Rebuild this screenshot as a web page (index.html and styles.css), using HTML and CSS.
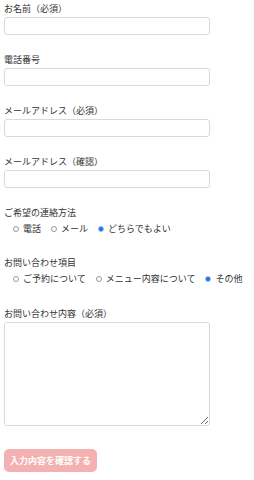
FILE: index.html
```html
<!DOCTYPE html>
<html lang="ja">
<head>
  <meta charset="UTF-8">
  <title>お問い合わせ</title>
  <link rel="stylesheet" href="styles.css">
</head>
<body>

<form class="contact-form">
  <div class="field">
    <label class="field-label" for="name">お名前（必須）</label>
    <input type="text" id="name" class="text-input">
  </div>

  <div class="field">
    <label class="field-label" for="tel">電話番号</label>
    <input type="text" id="tel" class="text-input">
  </div>

  <div class="field">
    <label class="field-label" for="mail">メールアドレス（必須）</label>
    <input type="text" id="mail" class="text-input">
  </div>

  <div class="field">
    <label class="field-label" for="mail2">メールアドレス（確認）</label>
    <input type="text" id="mail2" class="text-input">
  </div>

  <div class="field field-radio">
    <p class="field-label">ご希望の連絡方法</p>
    <div class="radio-row">
      <label class="radio-item"><input type="radio" name="contact"><span>電話</span></label>
      <label class="radio-item"><input type="radio" name="contact"><span>メール</span></label>
      <label class="radio-item"><input type="radio" name="contact" checked><span>どちらでもよい</span></label>
    </div>
  </div>

  <div class="field field-radio field-last-radio">
    <p class="field-label">お問い合わせ項目</p>
    <div class="radio-row">
      <label class="radio-item"><input type="radio" name="topic"><span>ご予約について</span></label>
      <label class="radio-item"><input type="radio" name="topic"><span>メニュー内容について</span></label>
      <label class="radio-item"><input type="radio" name="topic" checked><span>その他</span></label>
    </div>
  </div>

  <div class="field">
    <label class="field-label" for="message">お問い合わせ内容（必須）</label>
    <textarea id="message" class="text-area"></textarea>
  </div>

  <button type="button" class="confirm-btn">入力内容を確認する</button>
</form>

</body>
</html>
```

FILE: styles.css
```css
body {
  margin: 0;
  padding: 2px 4px 0;
  font-family: "Noto Sans CJK JP", sans-serif;
  font-size: 9px;
  color: #333;
  background: #fff;
}

.field {
  margin-bottom: 18px;
}

.field-label {
  display: block;
  margin: 0 0 2px;
  line-height: 13px;
}

.text-input {
  display: block;
  width: 206px;
  height: 18px;
  margin: 0;
  padding: 0 4px;
  border: 1px solid #d9d9d9;
  border-radius: 3px;
  box-sizing: border-box;
  font-size: 9px;
  font-family: inherit;
  outline: none;
}

/* ラジオボタン */
.field-radio {
  margin-bottom: 20px;
}
.field-last-radio {
  margin-bottom: 21px;
}
.field-radio .field-label {
  margin-bottom: 3px;
}

.radio-row {
  display: flex;
  align-items: center;
  height: 14px;
  padding-left: 9px;
  white-space: nowrap;
}

.radio-item {
  display: inline-flex;
  align-items: center;
  gap: 4px;
  margin-right: 10px;
  line-height: 14px;
}

.radio-item input {
  appearance: none;
  -webkit-appearance: none;
  width: 6px;
  height: 6px;
  margin: 0;
  border: 1px solid #999;
  border-radius: 50%;
  background: #fff;
  box-sizing: border-box;
}

.radio-item input:checked {
  border-color: #7fb4f5;
  background: radial-gradient(circle, #1a73e8 0 2px, #9cc4f5 2.5px);
}

.text-area {
  display: block;
  width: 206px;
  height: 104px;
  margin: 0;
  padding: 3px 4px;
  border: 1px solid #d9d9d9;
  border-radius: 3px;
  box-sizing: border-box;
  font-family: inherit;
  font-size: 9px;
  resize: both;
  outline: none;
}

.confirm-btn {
  display: block;
  height: 23px;
  margin-top: 23px;
  padding: 0 6px;
  border: none;
  border-radius: 5px;
  background: #f4b1b1;
  color: #fff;
  font-family: inherit;
  font-size: 9px;
  font-weight: bold;
  cursor: pointer;
}
```
